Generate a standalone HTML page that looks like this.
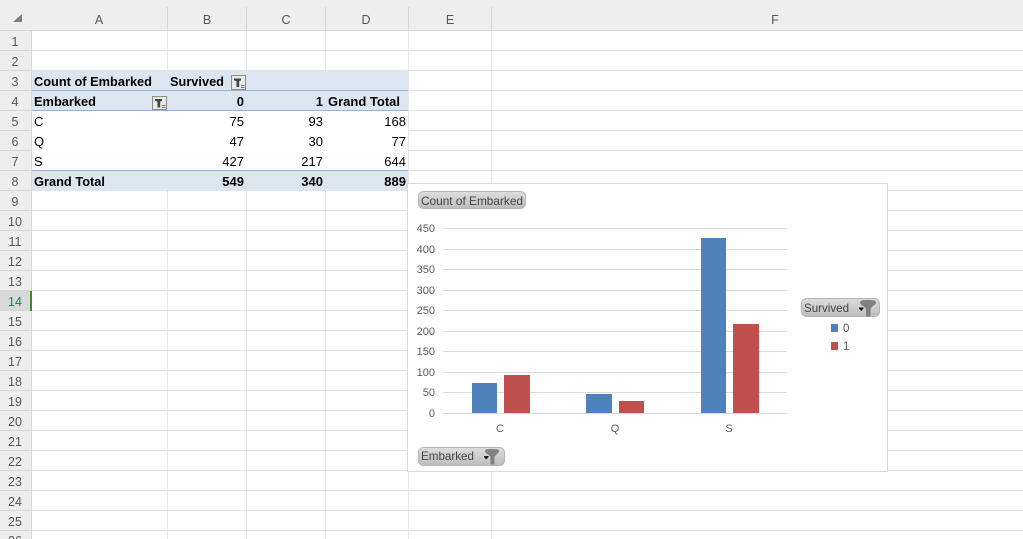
<!DOCTYPE html>
<html><head><meta charset="utf-8"><style>
html,body{margin:0;padding:0;width:1023px;height:539px;overflow:hidden;background:#fff}
svg{display:block}
text{font-family:"Liberation Sans",sans-serif}
.l line,.l rect{shape-rendering:crispEdges}
.h text{font-size:12.5px;fill:#555;text-anchor:middle}
.c text{font-size:13px;fill:#000}
.c .b{font-weight:bold}
.r{text-anchor:end}
.t text{font-size:11px;fill:#595959;text-anchor:end}
.x text{font-size:11px;fill:#595959;text-anchor:middle}
.p{font-size:12px;fill:#444}
</style></head><body>
<svg width="1023" height="539" viewBox="0 0 1023 539" xmlns="http://www.w3.org/2000/svg">
<defs><linearGradient id="g" x1="0" y1="0" x2="0" y2="1"><stop offset="0" stop-color="#dedede"/><stop offset="1" stop-color="#bcbcbc"/></linearGradient></defs>
<g class="l">
<rect x="0" y="0" width="1023" height="30" fill="#eeeeee"/>
<rect x="0" y="30" width="31" height="509" fill="#eeeeee"/>
<rect x="0" y="291" width="31" height="20" fill="#d9d9d9"/>
<g stroke="#e4e4e4">
<line x1="31" x2="1023" y1="50.5" y2="50.5"/><line x1="31" x2="1023" y1="70.5" y2="70.5"/><line x1="408" x2="1023" y1="90.5" y2="90.5"/><line x1="408" x2="1023" y1="110.5" y2="110.5"/><line x1="408" x2="1023" y1="130.5" y2="130.5"/><line x1="408" x2="1023" y1="150.5" y2="150.5"/><line x1="408" x2="1023" y1="170.5" y2="170.5"/><line x1="31" x2="1023" y1="190.5" y2="190.5"/><line x1="31" x2="1023" y1="210.5" y2="210.5"/><line x1="31" x2="1023" y1="230.5" y2="230.5"/><line x1="31" x2="1023" y1="250.5" y2="250.5"/><line x1="31" x2="1023" y1="270.5" y2="270.5"/><line x1="31" x2="1023" y1="290.5" y2="290.5"/><line x1="31" x2="1023" y1="310.5" y2="310.5"/><line x1="31" x2="1023" y1="330.5" y2="330.5"/><line x1="31" x2="1023" y1="350.5" y2="350.5"/><line x1="31" x2="1023" y1="370.5" y2="370.5"/><line x1="31" x2="1023" y1="390.5" y2="390.5"/><line x1="31" x2="1023" y1="410.5" y2="410.5"/><line x1="31" x2="1023" y1="430.5" y2="430.5"/><line x1="31" x2="1023" y1="450.5" y2="450.5"/><line x1="31" x2="1023" y1="470.5" y2="470.5"/><line x1="31" x2="1023" y1="490.5" y2="490.5"/><line x1="31" x2="1023" y1="510.5" y2="510.5"/><line x1="31" x2="1023" y1="530.5" y2="530.5"/>
<line x1="167.5" x2="167.5" y1="30" y2="70"/><line x1="246.5" x2="246.5" y1="30" y2="70"/><line x1="325.5" x2="325.5" y1="30" y2="70"/>
<line x1="167.5" x2="167.5" y1="191" y2="539"/><line x1="246.5" x2="246.5" y1="191" y2="539"/><line x1="325.5" x2="325.5" y1="191" y2="539"/>
<line x1="408.5" x2="408.5" y1="30" y2="539"/><line x1="491.5" x2="491.5" y1="30" y2="539"/>
</g>
<g stroke="#d6d6d6">
<line x1="0" x2="1023" y1="30.5" y2="30.5"/><line x1="31.5" x2="31.5" y1="30" y2="539"/>
<line x1="167.5" x2="167.5" y1="7" y2="30"/><line x1="246.5" x2="246.5" y1="7" y2="30"/><line x1="325.5" x2="325.5" y1="7" y2="30"/><line x1="408.5" x2="408.5" y1="7" y2="30"/><line x1="491.5" x2="491.5" y1="7" y2="30"/>
<line x1="0" x2="31" y1="50.5" y2="50.5"/><line x1="0" x2="31" y1="70.5" y2="70.5"/><line x1="0" x2="31" y1="90.5" y2="90.5"/><line x1="0" x2="31" y1="110.5" y2="110.5"/><line x1="0" x2="31" y1="130.5" y2="130.5"/><line x1="0" x2="31" y1="150.5" y2="150.5"/><line x1="0" x2="31" y1="170.5" y2="170.5"/><line x1="0" x2="31" y1="190.5" y2="190.5"/><line x1="0" x2="31" y1="210.5" y2="210.5"/><line x1="0" x2="31" y1="230.5" y2="230.5"/><line x1="0" x2="31" y1="250.5" y2="250.5"/><line x1="0" x2="31" y1="270.5" y2="270.5"/><line x1="0" x2="31" y1="290.5" y2="290.5"/><line x1="0" x2="31" y1="310.5" y2="310.5"/><line x1="0" x2="31" y1="330.5" y2="330.5"/><line x1="0" x2="31" y1="350.5" y2="350.5"/><line x1="0" x2="31" y1="370.5" y2="370.5"/><line x1="0" x2="31" y1="390.5" y2="390.5"/><line x1="0" x2="31" y1="410.5" y2="410.5"/><line x1="0" x2="31" y1="430.5" y2="430.5"/><line x1="0" x2="31" y1="450.5" y2="450.5"/><line x1="0" x2="31" y1="470.5" y2="470.5"/><line x1="0" x2="31" y1="490.5" y2="490.5"/><line x1="0" x2="31" y1="510.5" y2="510.5"/><line x1="0" x2="31" y1="530.5" y2="530.5"/>
</g>
<rect x="30" y="291" width="2" height="20" fill="#3f8a26"/>
<rect x="32" y="71" width="376" height="39" fill="#dce6f1"/>
<rect x="32" y="171" width="376" height="20" fill="#dce6f1"/>
<rect x="32" y="90" width="376" height="1" fill="#95b3d7"/>
<rect x="32" y="110" width="376" height="1" fill="#95b3d7"/>
<rect x="32" y="170" width="376" height="1" fill="#95b3d7"/>
</g>
<path d="M22 14V22H13Z" fill="#7f7f7f"/>
<g class="h">
<text x="99" y="24">A</text><text x="207" y="24">B</text><text x="286" y="24">C</text><text x="366" y="24">D</text><text x="450" y="24">E</text><text x="775" y="24">F</text>
<text x="15" y="46">1</text><text x="15" y="66">2</text><text x="15" y="86">3</text><text x="15" y="106">4</text><text x="15" y="126">5</text><text x="15" y="146">6</text><text x="15" y="166">7</text><text x="15" y="186">8</text><text x="15" y="206">9</text><text x="15" y="226">10</text><text x="15" y="246">11</text><text x="15" y="266">12</text><text x="15" y="286">13</text><text x="15" y="306" style="fill:#1f7a55">14</text><text x="15" y="326">15</text><text x="15" y="346">16</text><text x="15" y="366">17</text><text x="15" y="386">18</text><text x="15" y="406">19</text><text x="15" y="426">20</text><text x="15" y="446">21</text><text x="15" y="466">22</text><text x="15" y="486">23</text><text x="15" y="506">24</text><text x="15" y="526">25</text><text x="15" y="545">26</text>
</g>
<g class="c">
<text class="b" x="34" y="86" textLength="118" lengthAdjust="spacingAndGlyphs">Count of Embarked</text>
<text class="b" x="170" y="86" textLength="54" lengthAdjust="spacingAndGlyphs">Survived</text>
<text class="b" x="34" y="106" textLength="62" lengthAdjust="spacingAndGlyphs">Embarked</text>
<text class="b r" x="244" y="106">0</text><text class="b r" x="323" y="106">1</text>
<text class="b" x="328" y="106" textLength="72" lengthAdjust="spacingAndGlyphs">Grand Total</text>
<text x="34" y="126">C</text><text class="r" x="244" y="126">75</text><text class="r" x="323" y="126">93</text><text class="r" x="406" y="126">168</text>
<text x="34" y="146">Q</text><text class="r" x="244" y="146">47</text><text class="r" x="323" y="146">30</text><text class="r" x="406" y="146">77</text>
<text x="34" y="166">S</text><text class="r" x="244" y="166">427</text><text class="r" x="323" y="166">217</text><text class="r" x="406" y="166">644</text>
<text class="b" x="34" y="186" textLength="71" lengthAdjust="spacingAndGlyphs">Grand Total</text>
<text class="b r" x="244" y="186">549</text><text class="b r" x="323" y="186">340</text><text class="b r" x="406" y="186">889</text>
</g>
<g class="l">
<rect x="231.500" y="75.500" width="14" height="14" fill="#e8e8e8" stroke="#8c8c8c"/>
<rect x="152.500" y="96.500" width="14" height="13" fill="#e8e8e8" stroke="#8c8c8c"/>
</g>
<path d="M234 78.500H241V80.500L239.200 81V87H236.500V81L234 80.500Z" fill="#444"/>
<path d="M241 85.500H244.500M241 87.500H244.500" stroke="#777" fill="none"/>
<path d="M155 99H162V101L160.200 101.500V107.500H157.500V101.500L155 101Z" fill="#444"/>
<path d="M162 105.500H165.500M162 107.500H165.500" stroke="#777" fill="none"/>
<g class="l">
<rect x="407.500" y="183.500" width="480" height="288" fill="#ffffff" stroke="#d9d9d9"/>
<g stroke="#d9d9d9">
<line x1="443" x2="787" y1="228.500" y2="228.500"/><line x1="443" x2="787" y1="249.500" y2="249.500"/><line x1="443" x2="787" y1="269.500" y2="269.500"/><line x1="443" x2="787" y1="290.500" y2="290.500"/><line x1="443" x2="787" y1="310.500" y2="310.500"/><line x1="443" x2="787" y1="331.500" y2="331.500"/><line x1="443" x2="787" y1="351.500" y2="351.500"/><line x1="443" x2="787" y1="372.500" y2="372.500"/><line x1="443" x2="787" y1="392.500" y2="392.500"/><line x1="443" x2="787" y1="413.500" y2="413.500"/>
</g>
<g fill="#4f81bd"><rect x="472" y="383" width="25" height="30"/><rect x="586" y="394" width="26" height="19"/><rect x="701" y="238" width="25" height="175"/><rect x="831" y="324" width="7" height="8"/></g>
<g fill="#c0504d"><rect x="504" y="375" width="26" height="38"/><rect x="619" y="401" width="25" height="12"/><rect x="733" y="324" width="26" height="89"/><rect x="831" y="342" width="7" height="8"/></g>
</g>
<g class="t">
<text x="435" y="232">450</text><text x="435" y="253">400</text><text x="435" y="273">350</text><text x="435" y="294">300</text><text x="435" y="314">250</text><text x="435" y="335">200</text><text x="435" y="355">150</text><text x="435" y="376">100</text><text x="435" y="396">50</text><text x="435" y="417">0</text>
</g>
<g class="x"><text x="500" y="432">C</text><text x="615" y="432">Q</text><text x="729" y="432">S</text></g>
<text x="843" y="332" font-size="11.500" fill="#595959">0</text>
<text x="843" y="350" font-size="11.500" fill="#595959">1</text>
<rect x="418.500" y="191.500" width="107" height="17" rx="5" fill="url(#g)" stroke="#b5b5b5"/>
<text class="p" x="421" y="205" textLength="102" lengthAdjust="spacingAndGlyphs">Count of Embarked</text>
<rect x="801.500" y="298.500" width="78" height="18" rx="5" fill="url(#g)" stroke="#b5b5b5"/>
<text class="p" x="804" y="312" textLength="45" lengthAdjust="spacingAndGlyphs">Survived</text>
<path d="M859 307.500H863.500V308.500L861.200 311L859 308.500Z" fill="#111"/>
<path d="M860 302.500C860 300.500 862 300 868 300C874 300 876 300.500 876 302.500C876 305 871.500 306 870.500 309V316.500H866V309C865 306 860 305 860 302.500Z" fill="#808080"/>
<rect x="418.500" y="447.500" width="86" height="18" rx="5" fill="url(#g)" stroke="#b5b5b5"/>
<text class="p" x="421" y="460" textLength="53" lengthAdjust="spacingAndGlyphs">Embarked</text>
<path d="M484 456H488.500V457L486.200 459.500L484 457Z" fill="#111"/>
<path d="M485 451C485 449.500 487 449 492 449C497 449 499 449.500 499 451C499 453.500 495.500 454.500 494.500 457V464.500H490.500V457C489.500 454.500 485 453.500 485 451Z" fill="#808080"/>
</svg>
</body></html>
